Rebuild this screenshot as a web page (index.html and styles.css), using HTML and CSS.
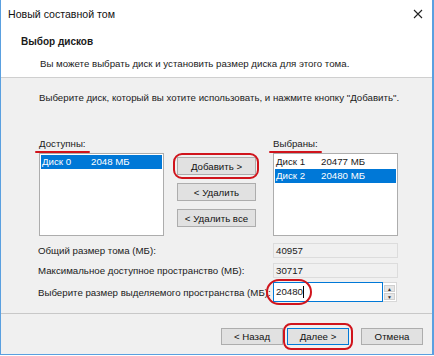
FILE: index.html
```html
<!DOCTYPE html>
<html lang="ru">
<head>
<meta charset="utf-8">
<link rel="stylesheet" href="styles.css">
</head>
<body>
<div class="window">
  <div class="titlebar">
    <span class="title">Новый составной том</span>
    <svg class="close" width="10" height="10" viewBox="0 0 10 10"><path d="M1 1 L9 9 M9 1 L1 9" stroke="#222" stroke-width="1.1" fill="none"/></svg>
  </div>
  <div class="header">
    <div class="h-title">Выбор дисков</div>
    <div class="h-sub">Вы можете выбрать диск и установить размер диска для этого тома.</div>
  </div>
  <div class="content">
    <div class="instr">Выберите диск, который вы хотите использовать, и нажмите кнопку "Добавить".</div>
    <div class="lists">
      <div class="col">
        <div class="lbl marked">Доступны:</div>
        <div class="listbox">
          <div class="item sel"><span class="n">Диск 0</span><span>2048 МБ</span></div>
        </div>
      </div>
      <div class="btncol">
        <button class="btn add">Добавить &gt;</button>
        <button class="btn">&lt; Удалить</button>
        <button class="btn">&lt; Удалить все</button>
      </div>
      <div class="col">
        <div class="lbl marked">Выбраны:</div>
        <div class="listbox">
          <div class="item"><span class="n">Диск 1</span><span>20477 МБ</span></div>
          <div class="item sel"><span class="n">Диск 2</span><span>20480 МБ</span></div>
        </div>
      </div>
    </div>
    <div class="rows">
      <div class="row"><span class="rl">Общий размер тома (МБ):</span><span class="ro">40957</span></div>
      <div class="row"><span class="rl">Максимальное доступное пространство (МБ):</span><span class="ro">30717</span></div>
      <div class="row"><span class="rl">Выберите размер выделяемого пространства (МБ):</span>
        <span class="spin"><span class="inp">20480<span class="caret"></span></span><span class="arrows"><span class="ar">▲</span><span class="ar">▼</span></span><span class="mark-ell"></span></span>
      </div>
    </div>
  </div>
  <div class="footer">
    <button class="btn fb">&lt; Назад</button>
    <button class="btn fb def">Далее &gt;</button>
    <button class="btn fb cancel">Отмена</button>
  </div>
</div>
</body>
</html>
```

FILE: styles.css
```css
* { box-sizing: border-box; }
html, body { margin: 0; padding: 0; background: #fff; }
body { font-family: "Liberation Sans", Arial, sans-serif; font-size: 9.7px; color: #1a1a1a; }
.window {
  width: 434px; height: 355px;
  border-left: 1px solid #5aa0e0; border-right: 2px solid #5aa0e0; border-bottom: 1px solid #5aa0e0;
  background: #f0f0f0;
  display: flex; flex-direction: column;
}
.titlebar {
  height: 28px; background: #fff;
  display: flex; align-items: center; justify-content: space-between;
  padding: 0 9px 0 7px;
}
.title { font-size: 10.6px; color: #111; }
.close { display: block; margin-top: -1px; }
.header {
  height: 50px; background: #fff;
  border-bottom: 1px solid #cfcfcf;
  padding: 7px 0 0 20px;
}
.h-title { font-weight: bold; font-size: 10px; line-height: 13px; }
.h-sub { padding-left: 19px; margin-top: 9px; line-height: 13px; }
.content { height: 236px; padding: 13px 0 0 38px; border-bottom: 1px solid #c8c8c8; }
.instr { line-height: 13px; white-space: nowrap; }
.lists { display: flex; margin-top: 34px; }
.col { width: 125px; display: flex; flex-direction: column; }
.lbl { line-height: 12px; height: 13px; position: relative; align-self: flex-start; }
.marked::after {
  content: ""; position: absolute; left: -4px; right: -4px; bottom: -2px;
  height: 2px; background: #d0141c; border-radius: 1px;
}
.listbox {
  margin-top: 2px; height: 83px; background: #fff; border: 1px solid #adadad;
  padding: 1px;
}
.item { height: 14px; line-height: 14px; display: flex; padding-left: 1px; }
.item.sel { background: #0078d7; color: #fff; }
.item .n { width: 49px; }
.col:last-child .item .n { width: 45px; }
.btncol { width: 79px; margin: 19px 17px 0 13px; display: flex; flex-direction: column; gap: 8px; }
.btn {
  font-family: inherit; font-size: 9.7px; color: #111;
  background: #e1e1e1; border: 1px solid #adadad; height: 18px; padding: 0;
  margin: 0; position: relative;
}
.btn.add::after {
  content: ""; position: absolute; left: -5px; right: -4px; top: -5px; bottom: -5px;
  border: 2px solid #d0141c; border-radius: 9px;
}
.rows { margin-top: 7px; display: flex; flex-direction: column; gap: 5px; }
.row { display: flex; align-items: center; height: 15px; }
.row:last-child { height: 20px; margin-top: -1px; }
.rl { width: 234px; margin-left: -1px; white-space: nowrap; }
.ro {
  width: 125px; height: 15px; line-height: 13px; padding-left: 2px;
  border: 1px solid #dcdcdc; background: #f0f0f0; margin-left: 1px;
}
.spin { position: relative; display: flex; width: 124px; height: 20px; margin-left: 1px; }
.inp {
  width: 110px; height: 20px; border: 1px solid #0078d7; background: #fff;
  line-height: 18px; padding-left: 2px; display: flex; align-items: center;
}
.caret { display: inline-block; width: 1px; height: 12px; background: #000; }
.arrows { width: 14px; display: flex; flex-direction: column; justify-content: center; gap: 1px; background: #fff; border: 1px solid #d8d8d8; border-left: none; padding: 1px; }
.ar { height: 7px; font-size: 5px; line-height: 7px; text-align: center; background: #e6e6e6; color: #333; border: 1px solid #cfcfcf; }
.mark-ell {
  position: absolute; left: -7px; top: -3px; width: 46px; height: 26px;
  border: 2px solid #d0141c; border-radius: 13px;
}
.footer { flex: 1; display: flex; justify-content: flex-end; padding: 14px 9px 0 0; }
.fb { width: 62px; height: 17px; }
.fb.def { border-color: #0078d7; margin-left: 4px; }
.fb.def::after {
  content: ""; position: absolute; left: -5px; right: -5px; top: -6px; bottom: -6px;
  border: 2px solid #d0141c; border-radius: 8px;
}
.fb.cancel { margin-left: 12px; }
```
